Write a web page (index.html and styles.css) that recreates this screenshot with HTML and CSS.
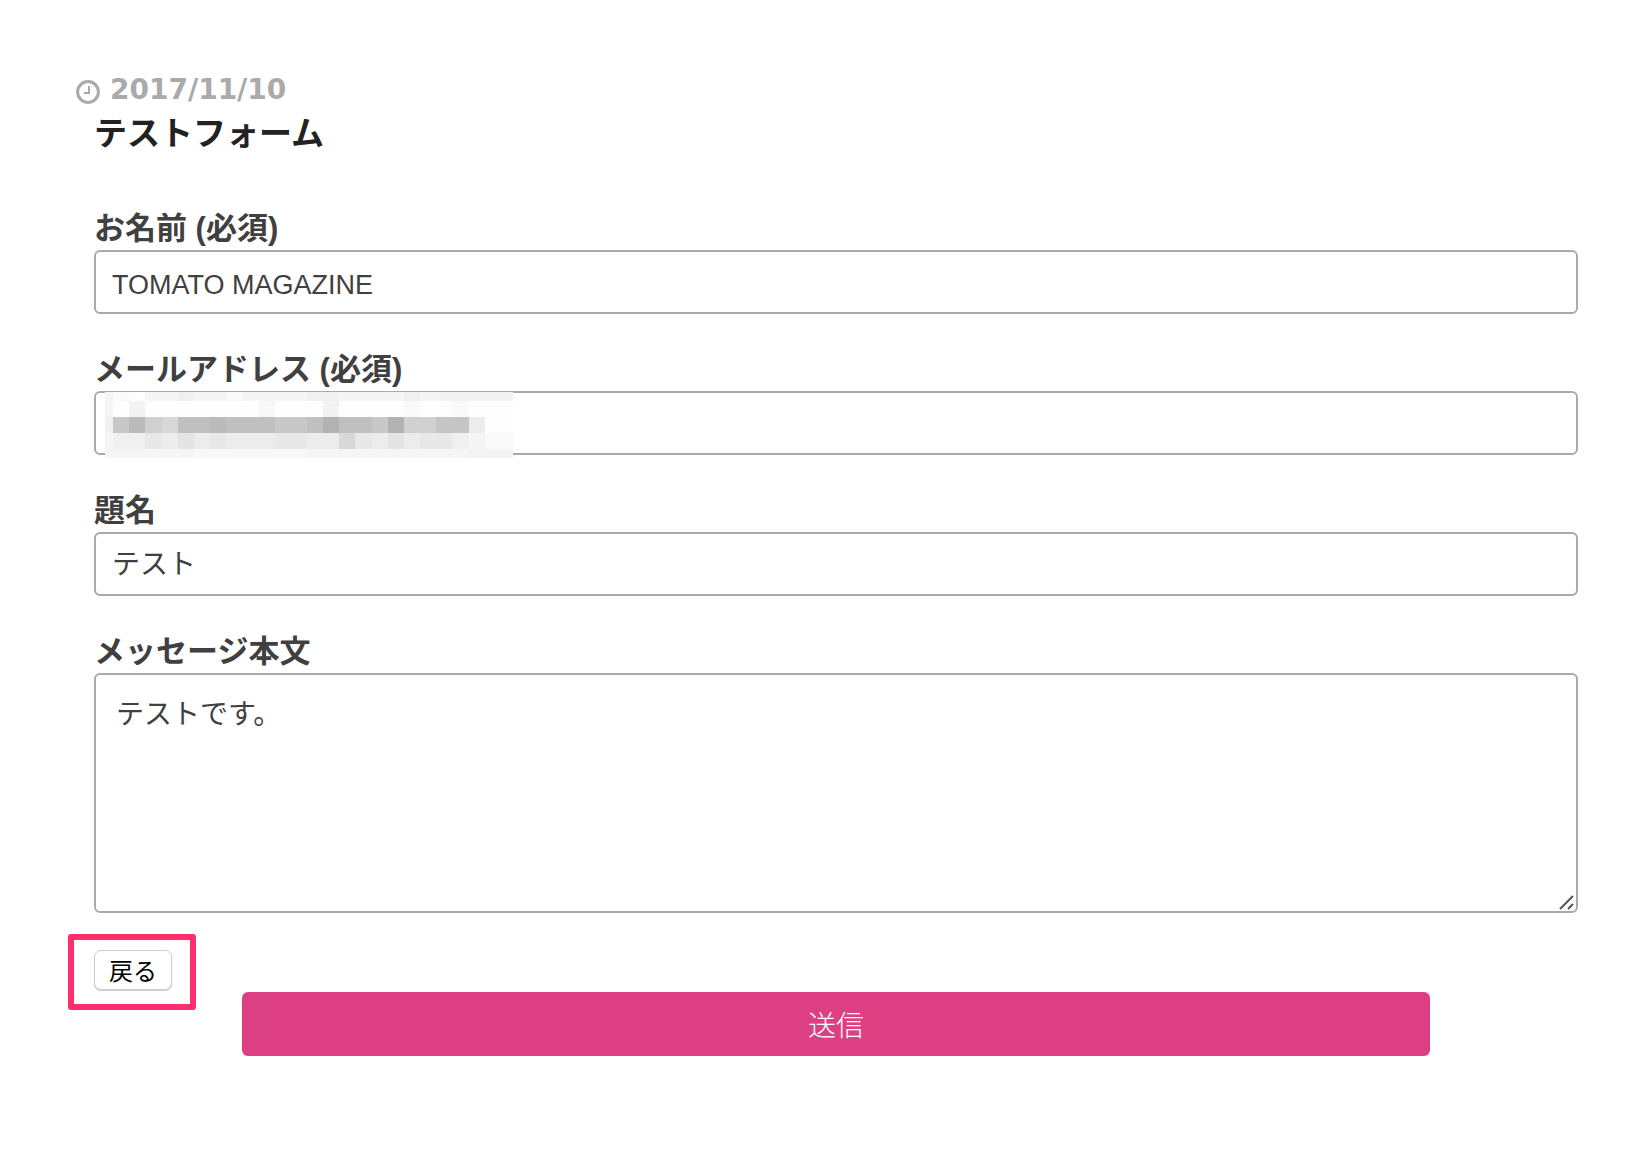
FILE: index.html
```html
<!doctype html>
<html lang="ja">
<head>
<meta charset="utf-8">
<meta name="viewport" content="width=device-width">
<title>テストフォーム</title>
<link rel="stylesheet" href="styles.css">
</head>
<body>
<article class="entry">
    <p class="entry-date">
        <svg class="icon-clock" viewBox="0 0 24 24"><circle cx="12" cy="12" r="10.4"/><path d="M13 6v7H8"/></svg>
        <time datetime="2017-11-10">2017/11/10</time>
    </p>
    <div class="entry-body">
        <h1 class="entry-title">テストフォーム</h1>
        <form class="contact-form" onsubmit="return false;">
            <div class="form-item">
                <label for="yourName">お名前 (必須)</label>
                <input class="form-input input-en" type="text" id="yourName" value="TOMATO MAGAZINE">
            </div>
            <div class="form-item">
                <label for="yourEmail">メールアドレス (必須)</label>
                <div class="input-box">
                    <input class="form-input" type="email" id="yourEmail">
                    <!-- モザイク -->
                    <svg class="mosaic" viewBox="0 0 404 66" preserveAspectRatio="none" shape-rendering="crispEdges">
                        <rect width="404" height="66" fill="#fefefe"/>
                        <path fill="#f5f5f5" d="M0 0h404v9H0zM0 57h404v9H0zM0 9h8v48H0z"/>
                        <path fill="#fafafa" d="M8 0h16v9H8zM120 0h16v9h-16zM296 9h16v16h-16zM344 9h16v16h-16zM376 41h28v16h-28z"/>
                        <path fill="#fdfdfd" d="M24 0h16v9H24z"/>
                        <path fill="#f0f0f0" d="M72 0h16v9H72zM200 0h32v9h-32zM296 0h16v9h-16zM0 25h8v16H0z"/>
                        <path fill="#f3f3f3" d="M24 9h16v16H24zM216 9h16v16h-16zM328 0h76v9h-76zM360 57h44v9h-44z"/>
                        <path fill="#f8f8f8" d="M152 9h16v16h-16zM88 57h112v9H88z"/>
                        <path fill="#c8c8c8" d="M8 25h16v16H8zM168 25h32v16h-32zM264 25h16v16h-16z"/>
                        <path fill="#bbb" d="M24 25h16v16H24zM104 25h16v16h-16z"/>
                        <path fill="#d0d0d0" d="M40 25h16v16H40zM296 25h32v16h-32z"/>
                        <path fill="#d8d8d8" d="M56 25h16v16H56zM232 41h16v16h-16z"/>
                        <path fill="#c0c0c0" d="M72 25h32v16H72zM120 25h48v16h-48zM200 25h16v16h-16zM232 25h32v16h-32z"/>
                        <path fill="#b2b2b2" d="M216 25h16v16h-16zM280 25h16v16h-16z"/>
                        <path fill="#c5c5c5" d="M328 25h32v16h-32z"/>
                        <path fill="#ececec" d="M360 25h16v16h-16zM56 41h16v16H56zM88 41h16v16H88zM120 41h48v16h-48zM200 41h32v16h-32zM264 41h16v16h-16zM296 41h16v16h-16z"/>
                        <path fill="#f0f0f0" d="M8 41h32v16H8zM344 41h16v16h-16z"/>
                        <path fill="#e8e8e8" d="M40 41h16v16H40zM104 41h16v16h-16zM168 41h32v16h-32zM248 41h16v16h-16zM312 41h32v16h-32z"/>
                        <path fill="#e4e4e4" d="M72 41h16v16H72zM280 41h16v16h-16z"/>
                        <path fill="#f5f5f5" d="M360 41h16v16h-16z"/>
                    </svg>
                </div>
            </div>
            <div class="form-item">
                <label for="yourSubject">題名</label>
                <input class="form-input" type="text" id="yourSubject" value="テスト">
            </div>
            <div class="form-item">
                <label for="yourMessage">メッセージ本文</label>
                <div class="input-box">
                    <textarea class="form-input form-textarea" id="yourMessage">テストです。</textarea>
                    <svg class="icon-resize" viewBox="0 0 16 16"><path d="M2 15L15 2M10 15L15 10"/></svg>
                </div>
            </div>
            <div class="back-box">
                <div class="back-mark"><button class="back-btn" type="button">戻る</button></div>
            </div>
            <button class="submit-btn" type="submit">送信</button>
        </form>
    </div>
</article>
</body>
</html>
```
FILE: styles.css
```css
body,h1,p {
    margin: 0;
    padding: 0;
}
body {
    background: #fff;
    color: #404040;
    font-family: "Liberation Sans", "Noto Sans CJK JP", sans-serif;
}
.entry {padding: 74px 52px 60px 76px;}
.entry-date {
    display: flex;
    align-items: center;
    gap: 10px;
    height: 36px;
    color: #aaa;
    font: 700 28px/32px "DejaVu Sans", sans-serif;
}
.entry-date time {padding-bottom: 4px;}
.icon-clock {width: 24px;height: 24px;fill: none;stroke: #aaa;stroke-width: 3;}
.icon-clock path {stroke-width: 2;}
.entry-body {padding-left: 18px;}
.entry-title {color: #222;font-size: 33px;line-height: 48px;font-weight: 700;}
.contact-form {margin-top: 50px;}
.form-item {margin-bottom: 35px;}
.form-item label {display: block;font-size: 31px;line-height: 42px;font-weight: 700;}
.form-input {
    display: block;
    box-sizing: border-box;
    width: 100%;
    height: 64px;
    padding: 0 16px 4px;
    border: 2px solid #aaa;
    border-radius: 6px;
    background: #fff;
    color: #404040;
    font: 28px/40px "Liberation Sans", "Noto Sans CJK JP", sans-serif;
    outline: none;
}
.input-en {padding: 6px 16px 0;font-size: 27px;}
.form-textarea {height: 240px;padding: 20px;resize: none;}
.input-box {position: relative;}
.mosaic {position: absolute;top: 1px;left: 11px;width: 408px;height: 66px;}
.icon-resize {
    position: absolute;
    right: 4px;
    bottom: 3px;
    width: 16px;
    height: 16px;
    fill: none;
    stroke: #555;
    stroke-width: 2;
    pointer-events: none;
}
.back-box {display: flex;align-items: center;height: 44px;}
.back-mark {position: relative;}
/* 戻るボタンを囲む赤枠 */
.back-mark:before {
    content: "";
    position: absolute;
    top: -16px;
    right: -24px;
    bottom: -20px;
    left: -26px;
    border: 6px solid #ff2f6e;
    border-radius: 3px;
    pointer-events: none;
}
.back-btn {
    display: block;
    width: 78px;
    height: 40px;
    padding: 0;
    border: 1px solid #ccc;
    border-radius: 7px;
    box-shadow: 0 1px 1px #ccc;
    background: #fff;
    color: #000;
    font: 24px/36px "Noto Sans CJK JP", sans-serif;
}
.submit-btn {
    display: block;
    width: 80%;
    height: 64px;
    margin: 0 auto;
    border: 0 none;
    border-radius: 6px;
    background: #dc3f82;
    color: #fff;
    font: 300 28px/40px "Noto Sans CJK JP", sans-serif;
}
```
